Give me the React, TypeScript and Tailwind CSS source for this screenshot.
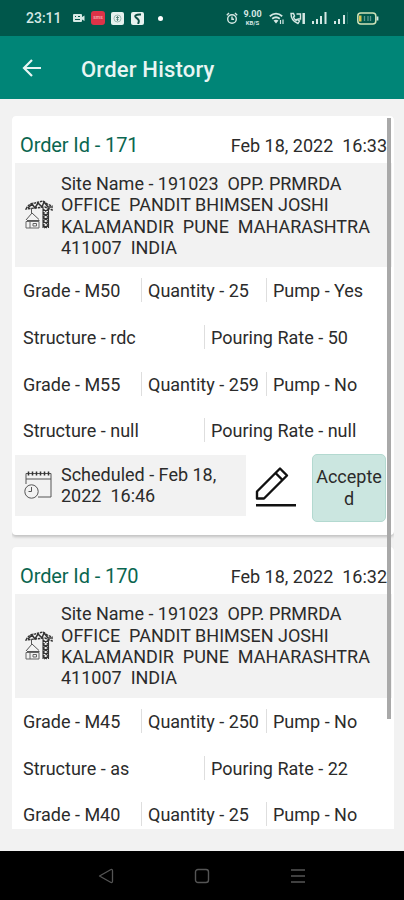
import React from "react";

interface Batch {
    grade: string;
    quantity: string;
    pump: string;
    structure?: string;
    rate?: string;
}

interface Order {
    id: string;
    date: string;
    site: string[];
    batches: Batch[];
    scheduled?: string[];
}

const SITE = [
    "Site Name - 191023  OPP. PRMRDA",
    "OFFICE  PANDIT BHIMSEN JOSHI",
    "KALAMANDIR  PUNE  MAHARASHTRA",
    "411007  INDIA",
];

const orders: Order[] = [
    {
        id: "171",
        date: "Feb 18, 2022  16:33",
        site: SITE,
        batches: [
            { grade: "M50", quantity: "25", pump: "Yes", structure: "rdc", rate: "50" },
            { grade: "M55", quantity: "259", pump: "No", structure: "null", rate: "null" },
        ],
        scheduled: ["Scheduled - Feb 18,", "2022  16:46"],
    },
    {
        id: "170",
        date: "Feb 18, 2022  16:32",
        site: SITE,
        batches: [
            { grade: "M45", quantity: "250", pump: "No", structure: "as", rate: "22" },
            { grade: "M40", quantity: "25", pump: "No" },
        ],
    },
];

function StatusBar() {
    return (
        <div className="h-9 shrink-0 bg-[#00574b] flex items-center pl-[26px] pr-[25px] text-[#d5e8e4]">
            <span className="w-[47px] pt-px text-[14px] font-medium">23:11</span>
            <svg width="12" height="10" viewBox="0 0 12 10" fill="currentColor">
                <path fillRule="evenodd" d="M1 1h7a1 1 0 0 1 1 1v6a1 1 0 0 1-1 1H1a1 1 0 0 1-1-1V2a1 1 0 0 1 1-1ZM2 3v1h1V3ZM5 3v1h2V3ZM2 6v1h5V6Z" />
                <path d="M9 4l2.500-1.500v5.500L9 6.500Z" />
            </svg>
            <div className="ml-[6px] w-[14px] h-[14px] rounded-[3px] bg-[#dd3348] flex items-center justify-center text-[5px] font-bold text-[#f5a3a9]">
                sms
            </div>
            <div className="ml-[6px] w-[13px] h-[13px] rounded-[2px] bg-[#e6f2ef] flex items-center justify-center">
                <svg width="9" height="9" viewBox="0 0 9 9" fill="none" stroke="#4f8077">
                    <circle cx="4.5" cy="4.5" r="3.5" strokeWidth=".5" />
                    <path d="M4.5 2v5M3 3.500h3M3.500 5.500h2" strokeWidth=".9" />
                </svg>
            </div>
            <div className="ml-[7px] w-[13px] h-[13px] rounded-[2px] bg-[#e6f2ef] flex items-center justify-center">
                <svg width="11" height="11" viewBox="0 0 11 11" fill="none" stroke="#0b4f45" strokeWidth="2">
                    <path d="M9 1.500C4 1 2 3 4 4.500S8 7 6 11" />
                </svg>
            </div>
            <div className="ml-[14px] w-[5px] h-[5px] rounded-full bg-white" />

            <div className="ml-auto flex items-center">
                <svg width="12" height="13" viewBox="0 0 12 13" fill="none" stroke="currentColor" strokeWidth="1.400">
                    <circle cx="6" cy="7" r="4.300" />
                    <path d="M6 4.500V7.300h2M.8 3.200L3 1M11.200 3.200L9 1" />
                </svg>
                <div className="ml-[5px] w-[19px] flex flex-col items-center font-bold">
                    <span className="text-[9px] leading-[9px] h-[9px]">9.00</span>
                    <span className="text-[6px] leading-[7px] h-[7px]">KB/S</span>
                </div>
                <svg className="ml-[7px]" width="16" height="13" viewBox="0 0 16 13" fill="none" stroke="currentColor" strokeWidth="1.800">
                    <path d="M.8 4.300Q7 -1 13.200 4.300M3.200 6.700Q7 3.700 10.800 6.700" />
                    <path d="M4.500 8.500Q7 7 9.500 8.500L7 11.500Z" fill="currentColor" stroke="none" />
                    <path d="M11.500 8v4M14 7.500v4.500" strokeWidth="1.200" />
                </svg>
                <svg className="ml-[5px]" width="16" height="13" viewBox="0 0 16 13" fill="none" stroke="currentColor" strokeWidth="1.400">
                    <path d="M1 1.500Q1 9 8 11.500L9.500 9L7 7.500L6 8.500Q4 7 3.500 5L4.500 4L3.500 1.500Z" />
                    <path d="M6.500 2h4v5h-3" />
                    <path d="M13.700 1v11" strokeWidth="2.500" />
                </svg>
                <svg className="ml-[6px]" width="15" height="12" viewBox="0 0 15 12" fill="currentColor">
                    <path d="M0 9h2v3H0ZM4 7h2v5H4ZM8 4h2v8H8ZM12.500 0h2v12h-2Z" />
                </svg>
                <svg className="ml-[7px]" width="14" height="12" viewBox="0 0 14 12" fill="currentColor">
                    <path d="M0 9h2v3H0ZM4 7h2v5H4ZM9 3h2v9H9Z" />
                    <path d="M13 0h1v12h-1Z" opacity=".18" />
                </svg>
                <svg className="ml-[9px]" width="22" height="13" viewBox="0 0 22 13" fill="none">
                    <rect x=".8" y="1" width="18" height="11" rx="3" stroke="#cfe3b9" strokeWidth="1.500" />
                    <path d="M20.500 4.500v4" stroke="#d5e8e4" strokeWidth="1.800" />
                    <path d="M2 3.500h2.500v6H2Z" fill="#d9c34c" />
                    <path d="M7.500 4v5M11 4v5M13.500 4v5" stroke="#5d978c" strokeWidth="1.300" />
                </svg>
            </div>
        </div>
    );
}

function SiteIcon() {
    return (
        <svg width="28" height="30" viewBox="0 0 28 30" fill="none" stroke="#333" strokeWidth="1">
            <path d="M1 9Q4 3 10 3L18 1L22 4L27 6V10L20 7L10 8Z" strokeWidth="1.400" strokeDasharray="2.500 .8" />
            <path d="M3 8L7 4L10 8L13 3L17 7L19 2L23 7L26 7" strokeWidth="1.500" />
            <path d="M18 8V28M23.500 8V28M18 9L23.500 13L18 17L23.500 21L18 25L22 28M23.500 9L18 13L23.500 17L18 21L23.500 25L19 28" strokeWidth="1.100" />
            <path d="M6.500 8V13M1 20L7 13L14 19.500M2 20.500H14.500" stroke="#555" />
            <path d="M1 21.500H14V28H1ZM5 21.500V28M8 23.500H11.500V26H8Z" stroke="#666" />
        </svg>
    );
}

function CalendarIcon() {
    return (
        <svg width="28" height="28" viewBox="0 0 28 28" fill="none" stroke="#555" strokeWidth="1">
            <path d="M2 13V2.500H27V26H14M2 8H27" />
            <path d="M4.500 .5v4M8.500 .5v4M12.500 .5v4M16.500 .5v4M20.500 .5v4M24.500 .5v4" stroke="#333" strokeWidth="1.500" />
            <circle cx="7.500" cy="20.500" r="6.700" />
            <path d="M7.500 16V20.500H4.500" />
        </svg>
    );
}

function EditIcon() {
    return (
        <svg width="42" height="42" viewBox="0 0 42 42" fill="none" stroke="#111" strokeWidth="2.400">
            <path d="M2 25.500L25 2.500L32 9.500L9 32.500H2Z" strokeLinejoin="round" />
            <path d="M20.500 7L27.500 14" />
            <path d="M1 39.300H41" strokeWidth="2.600" />
        </svg>
    );
}

function Divider() {
    return <div className="w-px h-6 bg-[#dedede]" />;
}

function BatchRows({ batch }: { batch: Batch }) {
    return (
        <>
            <div className="h-[46.7px] flex items-center">
                <span className="w-[118px] pt-px">Grade - {batch.grade}</span>
                <Divider />
                <span className="w-[124px] pt-px pl-[6px] whitespace-nowrap">Quantity - {batch.quantity}</span>
                <Divider />
                <span className="pt-px pl-[6px]">Pump - {batch.pump}</span>
            </div>
            {batch.structure && (
                <div className="h-[46.7px] flex items-center">
                    <span className="w-[181px] pt-px">Structure - {batch.structure}</span>
                    <Divider />
                    <span className="pt-px pl-[6px]">Pouring Rate - {batch.rate}</span>
                </div>
            )}
        </>
    );
}

function OrderCard({ order }: { order: Order }) {
    return (
        <div className="h-[419px] shrink-0 bg-white rounded-[4px] shadow-[0_2px_3px_rgba(0,0,0,0.2)] pl-[3px] pr-[2px]">
            <div className="h-[47px] pt-[11px] pl-[5px] pr-[5px] flex items-center justify-between whitespace-pre">
                <span className="text-[20px] text-[#0a6650] tracking-[-0.1px]">Order Id - {order.id}</span>
                <span className="pt-px">{order.date}</span>
            </div>
            <div className="h-[104px] bg-[#f2f2f2] flex items-center">
                <div className="w-[46px] pl-[10px]">
                    <SiteIcon />
                </div>
                <div className="pt-px whitespace-pre leading-[21.3px]">
                    {order.site.map((line) => (
                        <div key={line}>{line}</div>
                    ))}
                </div>
            </div>
            <div className="pl-2">
                {order.batches.map((batch) => (
                    <BatchRows key={batch.grade} batch={batch} />
                ))}
            </div>
            {order.scheduled && (
                <div className="flex items-start">
                    <div className="mt-px w-[231px] h-[61px] bg-[#f2f2f2] flex items-center">
                        <div className="w-[46px] pl-[9px]">
                            <CalendarIcon />
                        </div>
                        <div className="whitespace-pre leading-[21.3px]">
                            {order.scheduled.map((line) => (
                                <div key={line}>{line}</div>
                            ))}
                        </div>
                    </div>
                    <div className="ml-[9px] mt-[12px]">
                        <EditIcon />
                    </div>
                    <button className="ml-[15px] w-[74px] h-[68px] rounded-[5px] border border-[#b3d9d0] bg-[#cbe6e0] px-[2px] leading-[21.3px] break-all text-center">
                        Accepted
                    </button>
                </div>
            )}
        </div>
    );
}

export default function App() {
    return (
        <div className="w-[404px] h-[900px] overflow-hidden flex flex-col bg-[#f2f2f2] font-[Roboto,sans-serif]">
            <StatusBar />

            {/* Header */}
            <div className="h-[63px] shrink-0 bg-[#008577] flex items-center pl-[22px] text-white">
                <svg width="20" height="20" viewBox="0 0 20 20" fill="none" stroke="#e8f5f3" strokeWidth="2.200">
                    <path d="M10 2L2 10L10 18M2 10H19" />
                </svg>
                <h1 className="ml-[39px] pt-[3px] text-[22px] font-medium tracking-[0.2px] text-[#e8f5f3]">Order History</h1>
            </div>

            {/* Orders */}
            <div className="relative mt-[17px] ml-3 mr-[10px] h-[713px] shrink-0 overflow-hidden flex flex-col gap-[11.500px] text-[18px] text-[#2b2b2b]">
                {orders.map((order) => (
                    <OrderCard key={order.id} order={order} />
                ))}
                <div className="absolute top-[2px] right-[3px] w-[4px] h-[601px] bg-[#a9a9a9]" />
            </div>

            {/* Navigation bar */}
            <div className="mt-auto h-[49px] shrink-0 bg-black flex items-center justify-between px-[98px]">
                <svg width="16" height="16" viewBox="0 0 16 16" fill="none" stroke="#555" strokeWidth="1.300">
                    <path d="M1.500 8L13 1.500Q14.500 1 14.500 3V13Q14.500 15 13 14.500Z" strokeLinejoin="round" />
                </svg>
                <svg width="16" height="16" viewBox="0 0 16 16" fill="none" stroke="#555" strokeWidth="1.400">
                    <rect x="1.500" y="1.500" width="13" height="13" rx="2.500" />
                </svg>
                <svg width="16" height="16" viewBox="0 0 16 16" fill="none" stroke="#555" strokeWidth="1.400">
                    <path d="M1 2H15M1 8H15M1 14H15" />
                </svg>
            </div>
        </div>
    );
}
